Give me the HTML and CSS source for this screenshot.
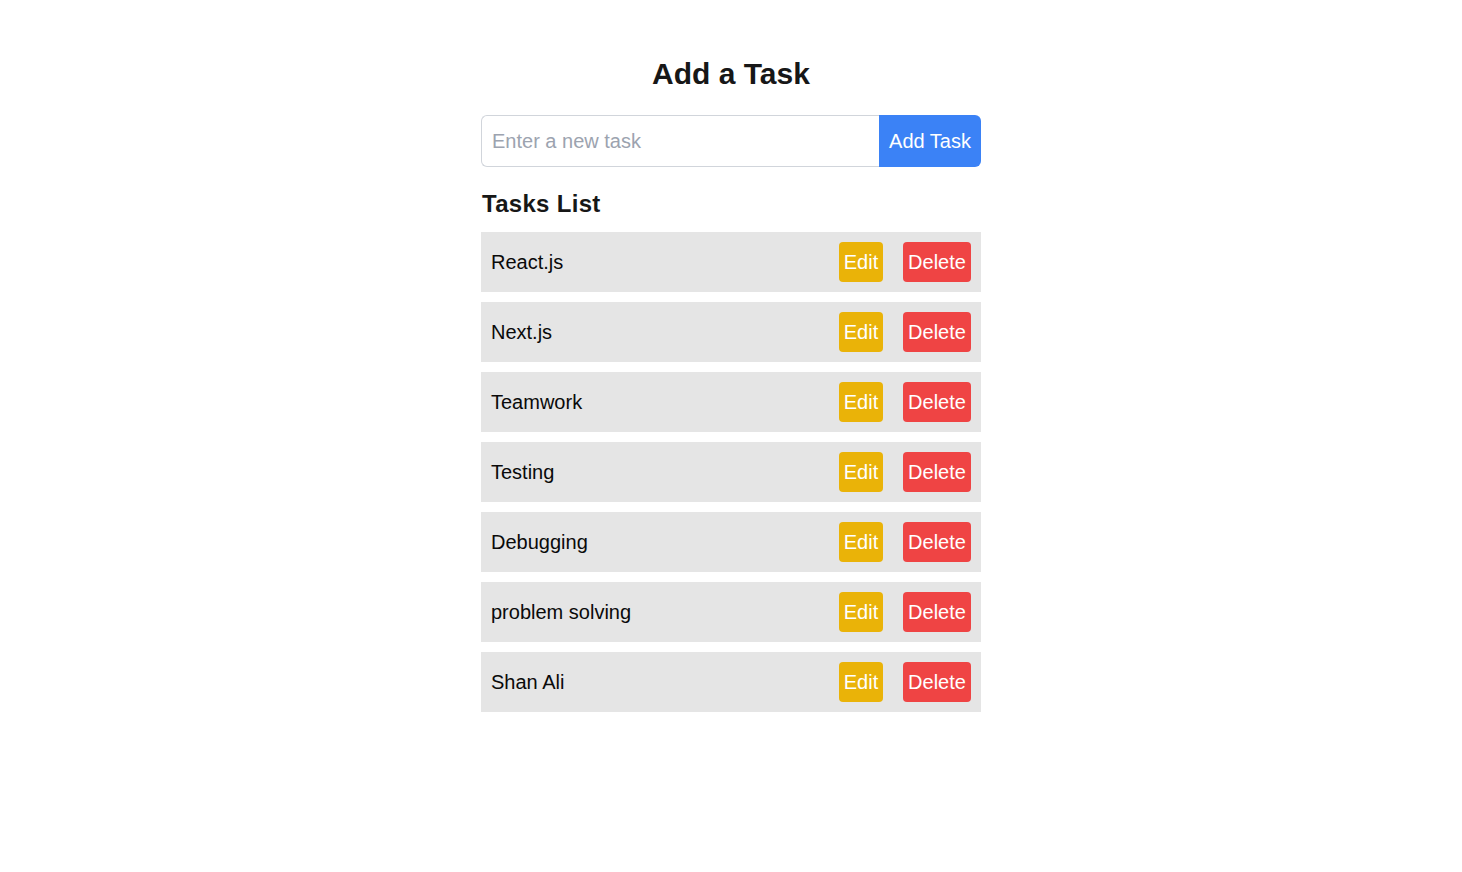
FILE: index.html
```html
<!DOCTYPE html>
<html>
<head>
<meta charset="utf-8">
<link rel="stylesheet" href="styles.css">
</head>
<body>
<div class="container">
  <h1 class="title">Add a Task</h1>
  <div class="form">
    <input class="task-input" type="text" placeholder="Enter a new task">
    <button class="add-btn">Add Task</button>
  </div>
  <h2 class="list-title">Tasks List</h2>
  <ul class="tasks">
    <li class="task"><span class="task-name">React.js</span><div class="actions"><button class="btn edit">Edit</button><button class="btn delete">Delete</button></div></li>
    <li class="task"><span class="task-name">Next.js</span><div class="actions"><button class="btn edit">Edit</button><button class="btn delete">Delete</button></div></li>
    <li class="task"><span class="task-name">Teamwork</span><div class="actions"><button class="btn edit">Edit</button><button class="btn delete">Delete</button></div></li>
    <li class="task"><span class="task-name">Testing</span><div class="actions"><button class="btn edit">Edit</button><button class="btn delete">Delete</button></div></li>
    <li class="task"><span class="task-name">Debugging</span><div class="actions"><button class="btn edit">Edit</button><button class="btn delete">Delete</button></div></li>
    <li class="task"><span class="task-name">problem solving</span><div class="actions"><button class="btn edit">Edit</button><button class="btn delete">Delete</button></div></li>
    <li class="task"><span class="task-name">Shan Ali</span><div class="actions"><button class="btn edit">Edit</button><button class="btn delete">Delete</button></div></li>
  </ul>
</div>
</body>
</html>
```
FILE: styles.css
```css
* { box-sizing: border-box; }
html, body {
  margin: 0;
  padding: 0;
  background: #ffffff;
  font-family: "Liberation Sans", Arial, sans-serif;
  color: #171717;
}
.container {
  width: 500px;
  margin: 0 auto;
  padding-top: 56px;
}
.title {
  margin: 0 0 23px;
  font-size: 30px;
  line-height: 36px;
  font-weight: 700;
  text-align: center;
}
.form {
  display: flex;
  height: 52px;
}
.task-input {
  flex: 1;
  min-width: 0;
  height: 52px;
  border: 1px solid #d1d5db;
  border-right: none;
  border-radius: 6px 0 0 6px;
  padding: 0 10px;
  font-family: inherit;
  font-size: 20px;
  color: #171717;
  outline: none;
}
.task-input::placeholder { color: #9ca3af; }
.add-btn {
  width: 102px;
  height: 52px;
  border: none;
  border-radius: 0 6px 6px 0;
  background: #3b82f6;
  color: #ffffff;
  font-family: inherit;
  font-size: 20px;
  padding: 0 10px;
}
.list-title {
  margin: 21px 0 12px 1px;
  font-size: 24px;
  line-height: 32px;
  font-weight: 700;
  letter-spacing: 0.3px;
}
.tasks {
  list-style: none;
  margin: 0;
  padding: 0;
  display: flex;
  flex-direction: column;
  gap: 10px;
}
.task {
  display: flex;
  align-items: center;
  justify-content: space-between;
  height: 60px;
  padding: 0 10px;
  background: #e5e5e5;
}
.task-name {
  font-size: 20px;
  line-height: 28px;
  color: #0a0a0a;
}
.actions {
  display: flex;
  gap: 20px;
}
.btn {
  height: 40px;
  border: none;
  border-radius: 4px;
  padding: 0;
  font-family: inherit;
  font-size: 20px;
  color: #ffffff;
  text-align: center;
}
.edit { width: 44px; background: #eab308; }
.delete { width: 68px; background: #ef4444; }
```
